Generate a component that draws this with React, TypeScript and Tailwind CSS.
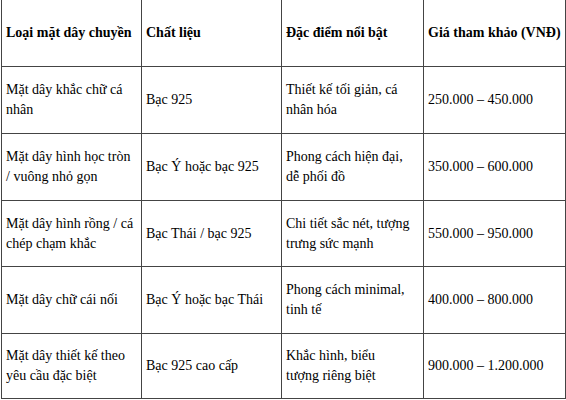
const headers = ["Loại mặt dây chuyền", "Chất liệu", "Đặc điểm nổi bật", "Giá tham khảo (VNĐ)"];

const rows = [
  ["Mặt dây khắc chữ cá nhân", "Bạc 925", "Thiết kế tối giản, cá nhân hóa", "250.000 – 450.000"],
  ["Mặt dây hình học tròn / vuông nhỏ gọn", "Bạc Ý hoặc bạc 925", "Phong cách hiện đại, dễ phối đồ", "350.000 – 600.000"],
  ["Mặt dây hình rồng / cá chép chạm khắc", "Bạc Thái / bạc 925", "Chi tiết sắc nét, tượng trưng sức mạnh", "550.000 – 950.000"],
  ["Mặt dây chữ cái nối", "Bạc Ý hoặc bạc Thái", "Phong cách minimal, tinh tế", "400.000 – 800.000"],
  ["Mặt dây thiết kế theo yêu cầu đặc biệt", "Bạc 925 cao cấp", "Khắc hình, biểu\ntượng riêng biệt", "900.000 – 1.200.000"],
];

export default function App() {
  return (
    <div className="w-[566px] h-[400px] bg-white overflow-hidden">
      <div
        className="ml-px grid grid-cols-[140px_140px_142px_142px] grid-rows-[67px_67px_67px_66px_67px_65px] border-l border-[#444] text-[14px] leading-[20px] text-black"
        style={{ fontFamily: '"Liberation Serif", "Times New Roman", serif' }}
      >
        {headers.map((h) => (
          <div key={h} className="flex items-center border-r border-b border-[#444] pl-[4px] pr-1 font-bold">
            {h}
          </div>
        ))}
        {rows.map((r, i) =>
          r.map((c, j) => (
            <div key={`${i}-${j}`} className="flex items-center whitespace-pre-line border-r border-b border-[#444] pl-[4px] pr-1">
              {c}
            </div>
          ))
        )}
      </div>
    </div>
  );
}
